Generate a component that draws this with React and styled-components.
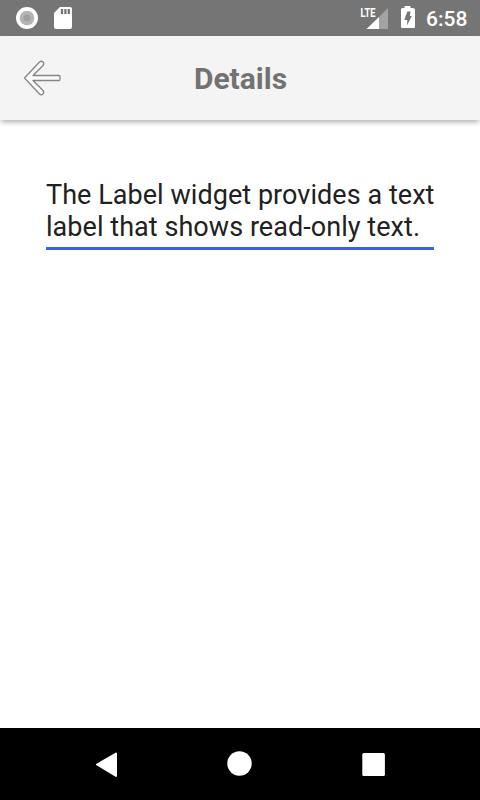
import React from "react";
import styled, { createGlobalStyle } from "styled-components";

const GlobalStyle = createGlobalStyle`
  * { box-sizing: border-box; }
  body { margin: 0; background: #fff; font-family: Roboto, sans-serif; }
`;
const Screen = styled.div`
  width: 480px;
  height: 800px;
  display: flex;
  flex-direction: column;
  background: #fff;
  overflow: hidden;
`;
const StatusBar = styled.header`
  height: 36px;
  flex: none;
  display: flex;
  align-items: center;
  justify-content: space-between;
  background: #757575;
  color: #fff;
`;
const StatusIcons = styled.svg`
  display: block;
  flex: none;
`;
const StatusRight = styled.div`
  display: flex;
  align-items: center;
  padding-right: 12px;
`;
const Clock = styled.span`
  width: 42px;
  padding-top: 2px;
  font-size: 21px;
  font-weight: 500;
  line-height: 36px;
  white-space: nowrap;
`;
const ActionBar = styled.div`
  height: 84px;
  flex: none;
  display: grid;
  grid-template-columns: 84px 1fr 84px;
  align-items: center;
  background: #f4f4f4;
  box-shadow: 0 3px 5px -1px rgba(0, 0, 0, 0.32);
`;
const BackButton = styled.button`
  width: 84px;
  height: 84px;
  padding: 0;
  border: 0;
  background: none;
  svg { display: block; }
`;
const Title = styled.h1`
  margin: 0;
  padding: 2px 0 0 1px;
  text-align: center;
  font-size: 30px;
  font-weight: 700;
  line-height: 36px;
  color: #727272;
`;
const Content = styled.main`
  flex: 1;
  padding: 59px 46px 0;
`;
const Label = styled.p`
  margin: 0;
  height: 71px;
  font-size: 27px;
  line-height: 32px;
  letter-spacing: 0.05px;
  color: #212121;
  white-space: nowrap;
  border-bottom: 3px solid #3d5afe;
`;
const NavBar = styled.nav`
  height: 72px;
  flex: none;
  background: #000;
  svg { display: block; }
`;
const NetworkText = styled.text`
  font-family: Roboto, sans-serif;
  font-size: 13px;
  font-weight: 700;
`;

export default function App() {
  return (
    <Screen>
      <GlobalStyle />
      <StatusBar>
        <StatusIcons width="84" height="36">
          <circle cx="27" cy="18" r="11" fill="#fff" />
          <circle cx="27" cy="18" r="7.300" fill="#b4b4b4" />
          <circle cx="27" cy="18" r="3.500" fill="#a0a0a0" />
          <path d="M60 7h10a2 2 0 0 1 2 2v18a2 2 0 0 1-2 2H56a2 2 0 0 1-2-2V13z" fill="#fff" />
          <path d="M62 9v5M65.400 9v5M68.800 9v5" stroke="#757575" strokeWidth="2.300" />
        </StatusIcons>
        <StatusRight>
          <StatusIcons width="66" height="36">
            <path d="M28 8v21h-9V17z" fill="#a3a3a3" />
            <path d="M19 17v12H6.500z" fill="#fff" />
            <NetworkText x="0.500" y="17" textLength="15" lengthAdjust="spacingAndGlyphs" fill="#fff">LTE</NetworkText>
            <path d="M42 8h2.500V6h6v2H53a2 2 0 0 1 2 2v17a1 1 0 0 1-1 1H42a1 1 0 0 1-1-1V9z" fill="#fff" />
            <path d="M47.300 11.500h3.200l-.7 4.500h2l-4.800 9.500.3-5.500h-3z" fill="#757575" />
          </StatusIcons>
          <Clock>6:58</Clock>
        </StatusRight>
      </StatusBar>
      <ActionBar>
        <BackButton aria-label="Back">
          <svg width="84" height="84" fill="#fafafa" stroke="#858585" strokeWidth="1.300" strokeLinejoin="round">
            <path d="M24.500 42 39.500 26q1.700-1.500 3.500 0 1.500 1.700 0 3.500L33 39.500h26q1 0 1 1v3q0 1-1 1H33L43 54.500q1.500 1.700 0 3.500-1.800 1.500-3.500 0z" />
          </svg>
        </BackButton>
        <Title>Details</Title>
      </ActionBar>
      <Content>
        <Label>The Label widget provides a text<br />label that shows read-only text.</Label>
      </Content>
      <NavBar>
        <svg width="480" height="72" fill="#fff">
          <path d="M97 36.500 116 25.500v22.500z" stroke="#fff" strokeWidth="2" strokeLinejoin="round" />
          <circle cx="239.500" cy="35.500" r="12.200" />
          <rect x="362.300" y="25" width="22.600" height="23" rx="1.500" />
        </svg>
      </NavBar>
    </Screen>
  );
}
